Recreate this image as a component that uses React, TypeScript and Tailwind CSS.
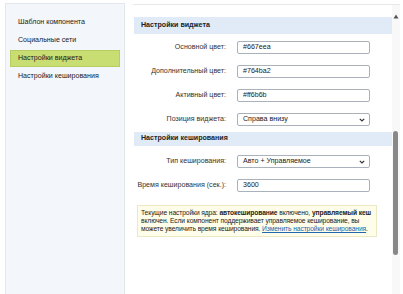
import React from "react";

const menu = ["Шаблон компонента", "Социальные сети", "Настройки виджета", "Настройки кеширования"];

function Row({ label, children }: { label: string; children: React.ReactNode }) {
  return (
    <div className="flex items-center h-[13px]">
      <div className="w-[92px] text-right whitespace-nowrap text-[#333]">{label}</div>
      <div className="ml-[11px] w-[133px] h-full">{children}</div>
    </div>
  );
}

function Input({ value }: { value: string }) {
  return (
    <div className="h-full border border-[#a9b2bb] rounded-[2px] bg-white flex items-center px-[5px] text-[#222]">
      {value}
    </div>
  );
}

function Select({ value }: { value: string }) {
  return (
    <div className="h-full border border-[#a9b2bb] rounded-[2px] bg-white flex items-center justify-between pl-[5px] pr-[4px] text-[#222]">
      <span>{value}</span>
      <svg width="6" height="4" viewBox="0 0 6 4">
        <path d="M0.8 0.8 L3 3 L5.2 0.8" fill="none" stroke="#333" strokeWidth="1.2" />
      </svg>
    </div>
  );
}

function Header({ title, tall }: { title: string; tall?: boolean }) {
  return (
    <div className={`${tall ? "h-[17px]" : "h-[14px]"} bg-[#e1ebf7] flex items-center pl-[7px] font-bold text-[#222]`}>
      {title}
    </div>
  );
}

export default function App() {
  return (
    <div
      className="w-[403px] h-[294px] bg-white flex overflow-hidden text-[7.1px] leading-none"
      style={{ fontFamily: '"Liberation Sans", Arial, sans-serif' }}
    >
      <div className="ml-[5px] mt-[3px] w-[120px] bg-[#f3f6fa] border-l border-t border-r border-[#e2e7ed] pt-[10px] flex flex-col gap-[1px]">
        {menu.map((m, i) => (
          <div
            key={m}
            className={`mx-[4px] h-[17px] flex items-center pl-[7px] text-[#222] ${
              i === 2 ? "bg-[#c8dd72] border border-[#b7cd60]" : "border border-transparent"
            }`}
          >
            {m}
          </div>
        ))}
      </div>

      <div className="flex-1 pl-[8px] pr-[3px] pt-[4px] flex flex-col">
        <div className="border-t border-[#e6e9ec] flex flex-1">
          <div className="flex-1 pl-[1px] pt-[12px] flex flex-col">
            <Header title="Настройки виджета" tall />
            <div className="flex flex-col gap-[11px] mt-[7px]">
              <Row label="Основной цвет:"><Input value="#667eea" /></Row>
              <Row label="Дополнительный цвет:"><Input value="#764ba2" /></Row>
              <Row label="Активный цвет:"><Input value="#ff6b6b" /></Row>
              <Row label="Позиция виджета:"><Select value="Справа внизу" /></Row>
            </div>
            <div className="mt-[6px]">
              <Header title="Настройки кеширования" />
            </div>
            <div className="flex flex-col gap-[11px] mt-[9px]">
              <Row label="Тип кеширования:"><Select value="Авто + Управляемое" /></Row>
              <Row label="Время кеширования (сек.):"><Input value="3600" /></Row>
            </div>
            <div className="mt-[13px] ml-[3px] w-[240px] bg-[#fdfde9] border border-[#ebe8c4] pl-[3px] pr-[2px] pt-[3px] pb-[3px] text-[#222] text-[6.7px] tracking-[-0.1px] leading-[8px]">
              Текущие настройки ядра: <b>автокеширование</b> включено, <b>управляемый кеш</b> включен. Если компонент поддерживает управляемое кеширование, вы можете увеличить время кеширования.{" "}
              <span className="text-[#2067b0] underline">Изменить настройки кеширования</span>.
            </div>
          </div>
          <div className="w-[8px] bg-[#f8f8f8] relative">
            <svg className="absolute left-[1px] top-[9px]" width="6" height="5" viewBox="0 0 6 5">
              <path d="M3 0.5 L5.5 4.5 L0.5 4.5 Z" fill="#555" />
            </svg>
            <div className="absolute left-[1px] top-[126px] w-[5px] h-[124px] rounded-[3px] bg-[#888]" />
          </div>
        </div>
      </div>
    </div>
  );
}
